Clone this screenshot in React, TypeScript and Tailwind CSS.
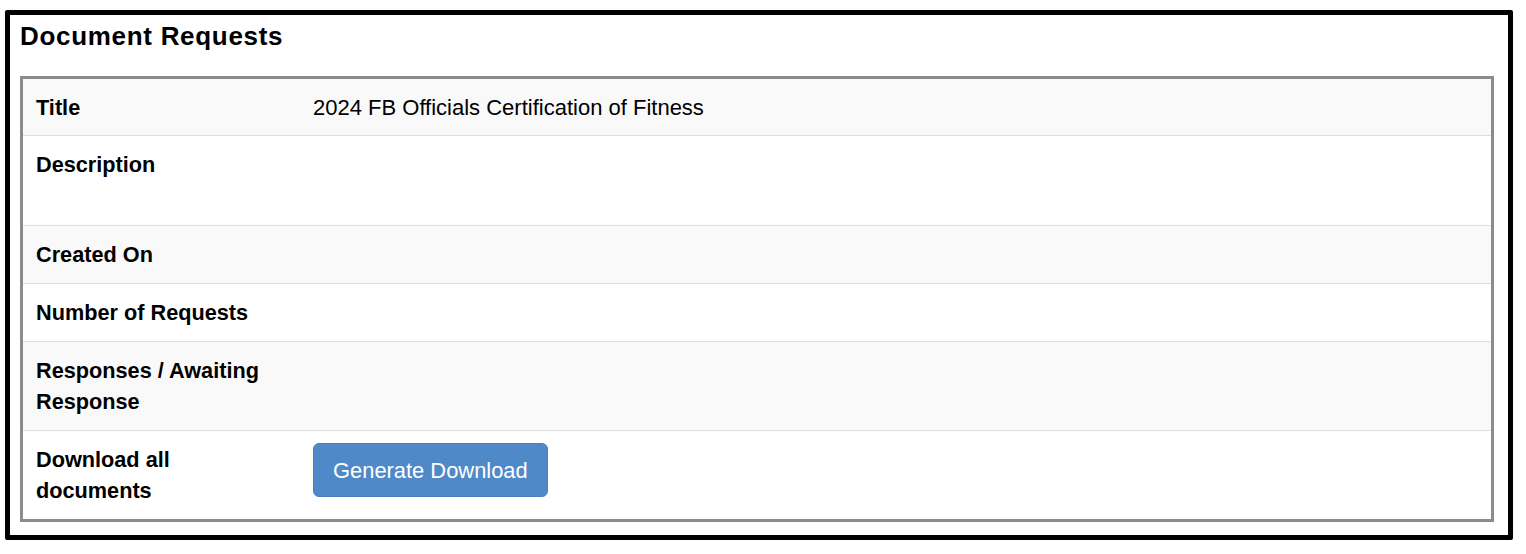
import React from 'react';

type Row = {
  label: string;
  value?: React.ReactNode;
  tall?: boolean;
};

const rows: Row[] = [
  { label: 'Title', value: '2024 FB Officials Certification of Fitness' },
  { label: 'Description', tall: true },
  { label: 'Created On' },
  { label: 'Number of Requests' },
  { label: 'Responses / Awaiting Response' },
  {
    label: 'Download all documents',
    value: (
      <button
        type="button"
        className="h-[54px] px-[19px] rounded-[6px] border border-[#4a80bd] bg-[#5089c7] text-white text-[21.9px] leading-[31px] -mt-[1px]"
      >
        Generate Download
      </button>
    ),
  },
];

function App() {
  return (
    <div className="w-[1526px] h-[554px] bg-white pt-[10px] pl-[5px] font-['Liberation_Sans',Arial,sans-serif] text-black">
      <div className="w-[1508px] h-[530px] border-[5px] border-black rounded-[2px] pl-[10px] pt-[7px]">
        <h3 className="text-[26px] leading-[29px] font-bold tracking-[0.7px]">Document Requests</h3>
        <div className="mt-[25px] w-[1474px] border-[3px] border-[#8c8c8c]">
          {rows.map((row, i) => (
            <div
              key={row.label}
              className={`flex ${i % 2 === 0 ? 'bg-[#f9f9f9]' : 'bg-white'} ${
                i < rows.length - 1 ? 'border-b border-[#dddddd]' : ''
              } ${row.tall ? 'h-[90px]' : ''} ${i === 0 ? 'pb-0' : 'pb-[1px]'}`}
            >
              <div className="w-[277px] shrink-0 pl-[13px] pr-[36px] pt-[13px] pb-[12px] text-[21.7px] leading-[31px] font-bold">
                {row.label}
              </div>
              <div className="flex-1 pl-[13px] pt-[13px] pb-[12px] text-[22px] leading-[31px]">
                {row.value}
              </div>
            </div>
          ))}
        </div>
      </div>
    </div>
  );
}

export default App;
